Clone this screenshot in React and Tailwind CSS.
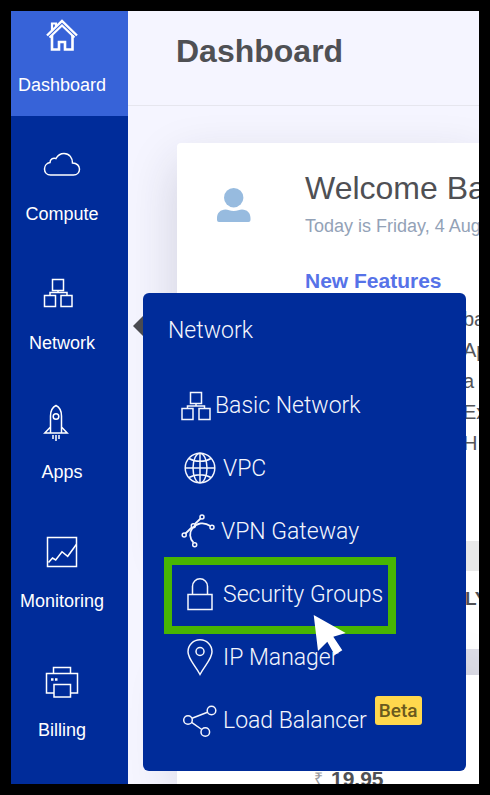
import React from "react";

function Icon({ className = "h-10 w-10", box = "0 0 40 40", children }) {
  return (
    <svg
      className={`shrink-0 ${className}`}
      viewBox={box}
      fill="none"
      stroke="currentColor"
      strokeWidth="1.5"
      aria-hidden="true"
    >
      {children}
    </svg>
  );
}

const HomeIcon = () => (
  <Icon>
    <path d="M5 20.500 20 6 35 20.500" strokeWidth="2.400" />
    <path d="M7.500 22.500 20 10.500 32.500 22.500" strokeWidth="2.200" />
    <path d="M10 20V34.500H17V27H23V34.500H30.500V20" strokeWidth="2.600" />
    <path d="M10 16V8.500H14V11" strokeWidth="2.200" />
  </Icon>
);

const CloudIcon = () => (
  <Icon>
    <path d="M8.500 31C5 31 2.500 28.500 2.500 25C2.500 21.500 5 19 8 18.500C8 15 11 13.500 14 14.500C16 11 19 9.500 22 9.500C27.500 9.500 30.500 14 30.500 19C35 19 37.500 22 37.500 25C37.500 28.500 35 31 31.500 31Z" />
  </Icon>
);

const NetworkIcon = () => (
  <Icon>
    <path d="M10.500 6.500h11v11h-11zM2.500 22.500h11v11h-11zM19 22.500h11v11h-11zM16 17.500v2M8 22.500v-3h17v3" />
  </Icon>
);

const RocketIcon = () => (
  <Icon>
    <path d="M8.500 31V14C8.500 9 11 5 14 3.500C17 5 19.500 9 19.500 14V31M8.500 25 2.800 31H25.200L19.500 25" />
    <circle cx="14" cy="14.500" r="2.800" />
    <path d="M11 33v4M14 33v6M17 33v4" />
  </Icon>
);

const ChartIcon = () => (
  <Icon>
    <path d="M5.500 6.500h29v29h-29z" />
    <path d="M6.500 31.500 10.500 27 13.700 29 20 20.700 25.700 25.300 34.500 13.300" />
  </Icon>
);

const PrinterIcon = () => (
  <Icon>
    <path d="M11.500 33H4.500V13.500H35.500V33H28.500M11.500 13.500V7.500H28.500V13.500M12 24.500h16.500v12.500H12z" />
    <path d="M9 19.500h2.500M13 19.500h2.500" strokeWidth="2.600" />
  </Icon>
);

const MenuNetworkIcon = () => (
  <Icon className="h-10 w-[30px]" box="0 0 30 40">
    <path d="M9.500 6.500h11v11h-11zM1 22.500h11v11H1zM18 22.500h11v11h-11zM15 17.500v3M6.500 22.500v-2.500h17v2.500" />
  </Icon>
);

const GlobeIcon = () => (
  <Icon className="h-10 w-[38px]" box="0 1 38 40">
    <circle cx="19" cy="20" r="14.800" />
    <ellipse cx="19" cy="20" rx="7" ry="14.800" />
    <path d="M19 5v30M4 20h30M8 10.500c6 3.800 16 3.800 22 0M8 29.500c6-3.800 16-3.800 22 0" />
  </Icon>
);

const VpnIcon = () => (
  <Icon className="h-10 w-9" box="0 1 36 40">
    <path d="M4.500 22.500 11 16.200M13.700 13.200 19.600 7.500" strokeWidth="1.800" />
    <path d="M29.300 15C23 10.500 16 12 11.500 17C8 21.500 8.500 27.500 12.500 31.700" strokeWidth="1.800" />
    <circle cx="21" cy="6" r="2" />
    <circle cx="12.300" cy="14.700" r="2" />
    <circle cx="3.200" cy="24" r="2" />
    <circle cx="31" cy="16.300" r="2" />
    <circle cx="13.700" cy="33.700" r="2" />
  </Icon>
);

const LockIcon = () => (
  <Icon className="h-10 w-[38px]" box="0 1 38 40">
    <path d="M7 20.500h24v15h-24zM11.500 20.500V12.300a7.500 7.500 0 0 1 15 0V20.500" />
  </Icon>
);

const PinIcon = () => (
  <Icon className="h-10 w-[38px]" box="0 1 38 40">
    <path d="M19 37.500C14 28 7 22 7 14.800a12 12 0 0 1 24 0C31 22 24 28 19 37.500Z" />
    <circle cx="19" cy="14.500" r="4" />
  </Icon>
);

const ShareIcon = () => (
  <Icon className="h-10 w-[38px]" box="0 1 38 40">
    <circle cx="7" cy="20" r="4.300" />
    <circle cx="30.500" cy="10.500" r="4.300" />
    <circle cx="24.300" cy="32" r="4.300" />
    <path d="M11 18.300 26.500 12.200M10.600 22.400 20.800 29.500" />
  </Icon>
);

const menuItems = [
  { label: "Basic Network", Glyph: MenuNetworkIcon },
  { label: "VPC", Glyph: GlobeIcon },
  { label: "VPN Gateway", Glyph: VpnIcon },
  { label: "Security Groups", Glyph: LockIcon, highlighted: true },
  { label: "IP Manager", Glyph: PinIcon },
  { label: "Load Balancer", Glyph: ShareIcon, badge: "Beta" },
];

function NetworkMenu() {
  return (
    <div className="absolute top-[48px] left-[132px] z-20 w-[323px] font-['Roboto',sans-serif] text-[#f4f6fd]">
      <svg
        className="absolute top-[23px] -left-[10px] h-5 w-[10px]"
        viewBox="0 0 10 20"
        aria-hidden="true"
      >
        <path d="M10 0V20L0 10Z" fill="#4a4b50" />
      </svg>
      <div className="rounded-md bg-[#002c9a] pb-[19px]">
        <h2 className="h-[81px] pt-[22px] pl-[25px] text-[23px] leading-8 font-light">
          Network
        </h2>
        <ul>
          {menuItems.map(({ label, Glyph, highlighted, badge }) => (
            <li key={label} className="relative">
              <a
                href="#"
                className="flex h-[63px] items-center gap-1 pl-[38px] text-[23px] leading-8 font-light whitespace-nowrap"
              >
                <Glyph />
                <span>{label}</span>
                {badge && (
                  <span className="mt-[7px] ml-1 self-start rounded-[3px] bg-[#ffd84d] px-1 text-[19px] leading-[29px] font-medium text-[#6b5a1e]">
                    {badge}
                  </span>
                )}
              </a>
              {highlighted && (
                <>
                  <span className="absolute -top-[6px] left-[21px] h-[77px] w-[232px] border-8 border-[#48b502]" />
                  <svg
                    className="absolute top-[52px] left-[170px] z-10 h-[41px] w-[34px]"
                    viewBox="0 0 34 41"
                    aria-hidden="true"
                  >
                    <path
                      d="M.7 0 32.700 18 20.300 21.700 29.300 35.300 21.700 40 14.300 26.700 5 36Z"
                      fill="#fff"
                    />
                  </svg>
                </>
              )}
            </li>
          ))}
        </ul>
      </div>
    </div>
  );
}

const navItems = [
  { label: "Compute", Glyph: CloudIcon },
  { label: "Network", Glyph: NetworkIcon, open: true },
  { label: "Apps", Glyph: RocketIcon },
  { label: "Monitoring", Glyph: ChartIcon },
  { label: "Billing", Glyph: PrinterIcon },
];

function Sidebar() {
  return (
    <nav className="relative z-10 w-[117px] shrink-0 bg-[#002c9a] text-lg leading-6 text-white">
      <ul>
        <li className="h-[105px] bg-[#3763d8]">
          <a href="#" className="flex flex-col items-center gap-[18px] pt-1 pr-[15px]">
            <HomeIcon />
            Dashboard
          </a>
        </li>
        {navItems.map(({ label, Glyph, open }) => (
          <li key={label} className="relative h-[129px]">
            <a href="#" className="flex flex-col items-center gap-[18px] pt-7 pr-[15px]">
              <Glyph />
              {label}
            </a>
            {open && <NetworkMenu />}
          </li>
        ))}
      </ul>
    </nav>
  );
}

const features = ["ba", "Ap", "a", "Ex", "H"];

export default function App() {
  return (
    <div className="h-screen overflow-hidden bg-black p-[11px] font-['Liberation_Sans',Arial,sans-serif]">
      <div className="flex h-full overflow-hidden bg-[#f5f5ff]">
        <Sidebar />
        <div className="flex min-w-0 flex-1 flex-col overflow-hidden">
          <header className="h-[95px] shrink-0 border-b border-[#e6e6ee] pt-5 pl-12">
            <h1 className="text-[32px] leading-10 font-bold text-[#4f5054]">Dashboard</h1>
          </header>
          <main className="flex flex-1 flex-col overflow-hidden pt-[37px] pl-[49px]">
            <section className="flex h-[398px] shrink-0 rounded-tl bg-white whitespace-nowrap shadow-[0_20px_50px_rgba(40,40,60,0.18)]">
              <div className="w-[128px] shrink-0 pt-[45px] pl-[40px]">
                <svg className="h-[34px] w-[34px]" viewBox="0 0 34 34" fill="#97bbdf" aria-hidden="true">
                  <circle cx="16.700" cy="9.700" r="9.700" />
                  <path d="M8.500 21.500C11 21.500 13 23 16.700 23S22.500 21.500 25 21.500C30 21.500 33.500 25 33.500 30V32Q33.500 34 31.500 34H2Q0 34 0 32V30C0 25 3.500 21.500 8.500 21.500Z" />
                </svg>
              </div>
              <div className="min-w-0 pt-[25px]">
                <h2 className="text-[32px] leading-10 text-[#4f5054]">Welcome Ba</h2>
                <p className="text-lg leading-9 text-[#93a2b7]">Today is Friday, 4 Aug</p>
                <h3 className="mt-[23px] text-[21px] leading-7 font-bold text-[#5672e8]">New Features</h3>
                <ul className="mt-[9px] pl-[158px] text-xl leading-[31px] text-[#55565a]">
                  {features.map((text) => (
                    <li key={text}>{text}</li>
                  ))}
                </ul>
              </div>
            </section>
            <div className="h-[30px] shrink-0 bg-[#e9e9e9]" />
            <section className="h-[78px] shrink-0 bg-white pt-3 pl-[288px]">
              <h3 className="text-[19px] leading-8 font-bold text-[#4f5054]">LY</h3>
            </section>
            <div className="h-[26px] shrink-0 bg-[#dfdfe9]" />
            <section className="flex-1 bg-white pt-[90px] pl-[137px] shadow-[0_0_50px_rgba(40,40,60,0.16)]">
              <p className="flex items-center gap-1 text-[21px] leading-7 font-bold text-[#4f5054]">
                <span className="w-[13px] text-base font-normal text-[#999a9e]">₹</span>
                19.95
              </p>
            </section>
          </main>
        </div>
      </div>
    </div>
  );
}
